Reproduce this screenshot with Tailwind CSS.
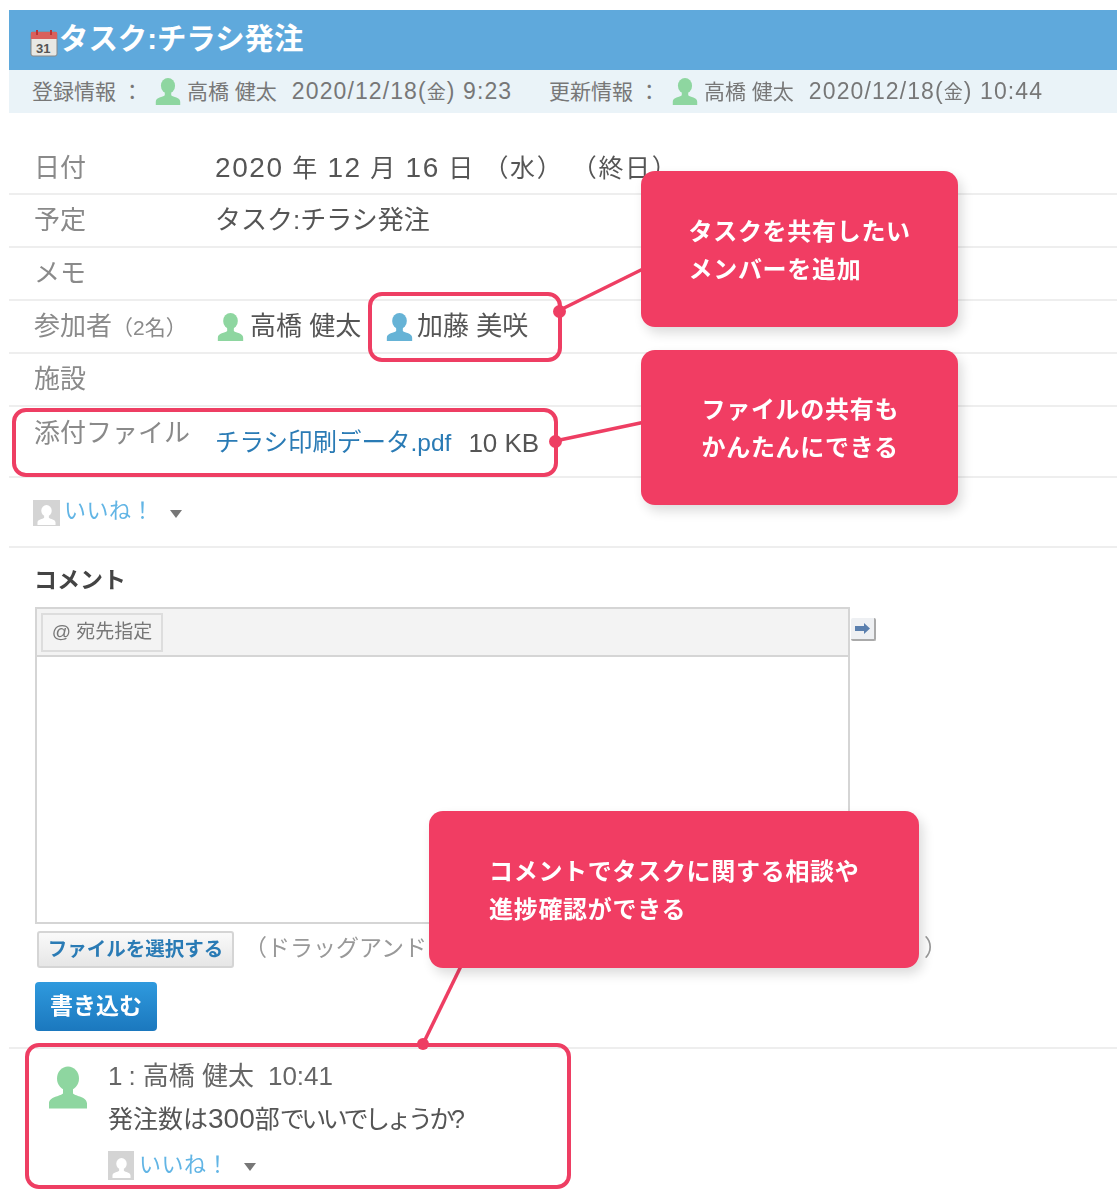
<!DOCTYPE html>
<html lang="ja"><head><meta charset="utf-8"><title>タスク</title>
<script src="https://cdn.jsdelivr.net/npm/@tailwindcss/browser@4"></script></head>
<body class="bg-white">
<svg class="hidden"><symbol id="p" viewBox="0 0 40 42"><ellipse cx="20" cy="12" rx="11" ry="12"/><path d="M15 22h10v5c3 3 14 3 14 10v5H1v-5c0-7 11-7 14-10z"/></symbol></svg>
<div class="relative w-[1117px] h-[1200px] overflow-hidden pt-[10px] blur-[0.4px] text-[#666] font-['Liberation_Sans','Noto_Sans_CJK_JP',sans-serif]">
  <div class="ml-[9px]">
    <div class="h-[60px] bg-[#5fa9dc] flex items-center pl-[21px] text-white font-bold text-[29.4px]">
      <svg width="29" height="29" viewBox="0 0 29 29" class="mt-[6px]"><rect x="1" y="3" width="26" height="24" rx="2" fill="#e8e8e4" stroke="#888"/><rect x="1" y="3" width="26" height="7" fill="#d9605c"/><rect x="6" y="1" width="2" height="5" fill="#b33"/><rect x="20" y="1" width="2" height="5" fill="#b33"/><text x="6" y="24" font-size="13" font-weight="700" fill="#555">31</text></svg>
      <span class="leading-none -mt-[2px]">タスク:チラシ発注</span>
    </div>
    <div class="h-[43px] bg-[#eaf3f8] flex items-center pl-[23px] text-[21px] text-[#777] whitespace-nowrap">
      <span class="w-[123px]">登録情報 ：</span>
      <svg class="w-[26px] h-[27px] text-[#8ed6a0] fill-current"><use href="#p"/></svg>
      <span class="ml-[6px] w-[362px]">高橋 健太<span class="ml-[15px] text-[23px] tracking-[1.1px]">2020/12/18(<span class="text-[19px]">金</span>) 9:23</span></span>
      <span class="w-[123px]">更新情報 ：</span>
      <svg class="w-[26px] h-[27px] text-[#8ed6a0] fill-current"><use href="#p"/></svg>
      <span class="ml-[6px]">高橋 健太<span class="ml-[15px] text-[23px] tracking-[1.1px]">2020/12/18(<span class="text-[19px]">金</span>) 10:44</span></span>
    </div>
    <div class="mt-[29px]">
      <div class="h-[53px] flex items-center border-b-2 border-[#eee] pl-[25px] text-[26px] whitespace-nowrap"><span class="w-[181px] mt-[2px] text-[#8a8a8a]">日付</span><span class="text-[25px] tracking-[1.6px] text-[#555]"><span class="text-[28px]">2020</span> 年 <span class="text-[28px]">12</span> 月 <span class="text-[28px]">16</span> 日 （水） （終日）</span></div>
      <div class="h-[53px] flex items-center border-b-2 border-[#eee] pl-[25px] text-[26px]"><span class="w-[181px] text-[#8a8a8a]">予定</span><span class="text-[#555]">タスク:チラシ発注</span></div>
      <div class="h-[53px] flex items-center border-b-2 border-[#eee] pl-[25px] text-[26px]"><span class="w-[181px] text-[#8a8a8a]">メモ</span></div>
      <div class="h-[53px] flex items-center border-b-2 border-[#eee] pl-[25px] text-[26px] whitespace-nowrap">
        <span class="w-[181px] text-[#8a8a8a]">参加者<span class="text-[21px]">（2名）</span></span>
        <svg class="w-[27px] h-[28px] ml-[2px] text-[#8ed6a0] fill-current"><use href="#p"/></svg>
        <span class="ml-[6px] w-[136px] text-[#555]">高橋 健太</span>
        <svg class="w-[27px] h-[28px] text-[#66b3d6] fill-current"><use href="#p"/></svg>
        <span class="ml-[4px] text-[#555]">加藤 美咲</span>
      </div>
      <div class="h-[53px] flex items-center border-b-2 border-[#eee] pl-[25px] text-[26px]"><span class="w-[181px] text-[#8a8a8a]">施設</span></div>
      <div class="h-[71px] flex border-b-2 border-[#eee] pl-[25px] text-[26px] whitespace-nowrap">
        <span class="w-[181px] text-[#8a8a8a] pt-[7px]">添付ファイル</span>
        <span class="pt-[18px] text-[24.5px] text-[#2a7bb5]">チラシ印刷データ.pdf</span><span class="pt-[17px] ml-[17px] text-[#555]">10 KB</span>
      </div>
      <div class="h-[70px] flex items-center border-b-2 border-[#eee] pl-[24px] text-[22px] text-[#62b5e5]">
        <span class="w-[27px] h-[26px] bg-[#d4d4d4] flex items-end justify-center mt-[2px]"><svg class="w-[19px] h-[22px] text-white fill-current"><use href="#p"/></svg></span>
        <span class="ml-[4px] -mt-[3px] tracking-[0.5px]">いいね！</span>
        <span class="ml-[16px] mt-[4px] w-0 h-0 border-x-[6px] border-x-transparent border-t-[8px] border-t-[#777]"></span>
      </div>
    </div>
    <div class="pl-[25px] pt-[15px] font-bold text-[23px] leading-[34px] text-[#444]">コメント</div>
    <div class="ml-[26px] mt-[10px] flex items-start">
      <div class="w-[815px] h-[317px] border-2 border-[#d5d5d5] bg-white">
        <div class="h-[48px] bg-[#f3f3f3] border-b-2 border-[#d5d5d5] pl-[4px] pt-[4px]">
          <div class="w-[122px] h-[39px] border-2 border-[#ddd] flex items-center justify-center text-[19px] text-[#777]">@ 宛先指定</div>
        </div>
      </div>
      <div class="w-[25px] h-[23px] mt-[11px] ml-[1px] rounded-[2px] bg-[#eef0f3] border-r-2 border-b-2 border-[#aaa] flex items-center justify-center">
        <svg width="17" height="11" viewBox="0 0 17 11"><path d="M1 3h9V0l6 5.500-6 5.500V8H1z" fill="#5a7fae"/></svg>
      </div>
    </div>
    <div class="ml-[28px] mt-[7px] flex items-center whitespace-nowrap">
      <div class="w-[197px] h-[37px] rounded-[3px] border-2 border-[#d5d5d5] bg-gradient-to-b from-[#fafafa] to-[#e6e6e6] flex items-center justify-center font-bold text-[19.5px] text-[#2a7bb5]">ファイルを選択する</div>
      <div class="ml-[10px] w-[703px] flex justify-between text-[23px] text-[#999] -mt-[3px]"><span>（ドラッグアンド</span><span>）</span></div>
    </div>
    <div class="ml-[26px] mt-[14px] w-[122px] h-[49px] rounded-[4px] bg-gradient-to-b from-[#2f9ade] to-[#1b78be] flex items-center justify-center text-white font-bold text-[23px]">書き込む</div>
    <div class="mt-[16px] border-t-2 border-[#eee] flex pl-[39px] pt-[14px]">
      <svg class="w-[40px] h-[43px] text-[#8ed6a0] fill-current mt-[3px]"><use href="#p"/></svg>
      <div class="ml-[20px] whitespace-nowrap">
        <div class="text-[26px] leading-[26px] text-[#666]">1<span class="ml-[6px] mr-[7px]">:</span>高橋 健太<span class="ml-[14px]">10:41</span></div>
        <div class="mt-[15px] text-[25px] leading-[30px] text-[#555]">発注数は<span class="text-[28px]">300</span>部<span class="tracking-[-3.5px]">でいいでしょうか?</span></div>
        <div class="mt-[16px] flex items-center text-[22px] leading-[30px] text-[#62b5e5]">
          <span class="w-[26px] h-[29px] bg-[#d4d4d4] flex items-end justify-center"><svg class="w-[19px] h-[24px] text-white fill-current"><use href="#p"/></svg></span>
          <span class="ml-[5px] tracking-[0.5px]">いいね！</span>
          <span class="ml-[15px] mt-[4px] w-0 h-0 border-x-[6px] border-x-transparent border-t-[8px] border-t-[#777]"></span>
        </div>
      </div>
    </div>
  </div>

  <svg class="absolute inset-0" width="1117" height="1200"><g stroke="#ee3e63" stroke-width="3.500" fill="#ee3e63"><line x1="558" y1="311" x2="645" y2="268"/><line x1="555" y1="441" x2="645" y2="422"/><line x1="462" y1="964" x2="423" y2="1044"/></g></svg>
  <div class="absolute left-[368px] top-[292px] w-[194px] h-[70px] rounded-[14px] border-4 border-[#ee3e63]"></div>
  <div class="absolute left-[12px] top-[408px] w-[546px] h-[69px] rounded-[14px] border-4 border-[#ee3e63]"></div>
  <div class="absolute left-[25px] top-[1043px] w-[546px] h-[146px] rounded-[14px] border-4 border-[#ee3e63]"></div>
  <span class="absolute left-[553px] top-[305px] w-[13px] h-[13px] rounded-full bg-[#ee3e63]"></span>
  <span class="absolute left-[549px] top-[435px] w-[13px] h-[13px] rounded-full bg-[#ee3e63]"></span>
  <span class="absolute left-[417px] top-[1038px] w-[12px] h-[12px] rounded-full bg-[#ee3e63]"></span>

  <div class="absolute left-[641px] top-[171px] w-[317px] h-[156px] pt-[3px] rounded-[14px] bg-[#f13d63] shadow-[4px_6px_12px_rgba(0,0,0,0.14)] flex items-center justify-center text-white font-bold text-[24px] leading-[38px] tracking-[0.7px]"><div class="w-[222px] whitespace-nowrap">タスクを共有したい<br>メンバーを追加</div></div>
  <div class="absolute left-[641px] top-[350px] w-[317px] h-[155px] pt-[3px] rounded-[14px] bg-[#f13d63] shadow-[4px_6px_12px_rgba(0,0,0,0.14)] flex items-center justify-center text-white font-bold text-[24px] leading-[38px] tracking-[0.7px]"><div class="w-[196px] whitespace-nowrap">ファイルの共有も<br>かんたんにできる</div></div>
  <div class="absolute left-[429px] top-[811px] w-[490px] h-[157px] pt-[3px] rounded-[14px] bg-[#f13d63] shadow-[4px_6px_12px_rgba(0,0,0,0.14)] flex items-center justify-center text-white font-bold text-[24px] leading-[38px] tracking-[0.7px]"><div class="w-[370px] whitespace-nowrap">コメントでタスクに関する相談や<br>進捗確認ができる</div></div>
</div>
</body></html>
